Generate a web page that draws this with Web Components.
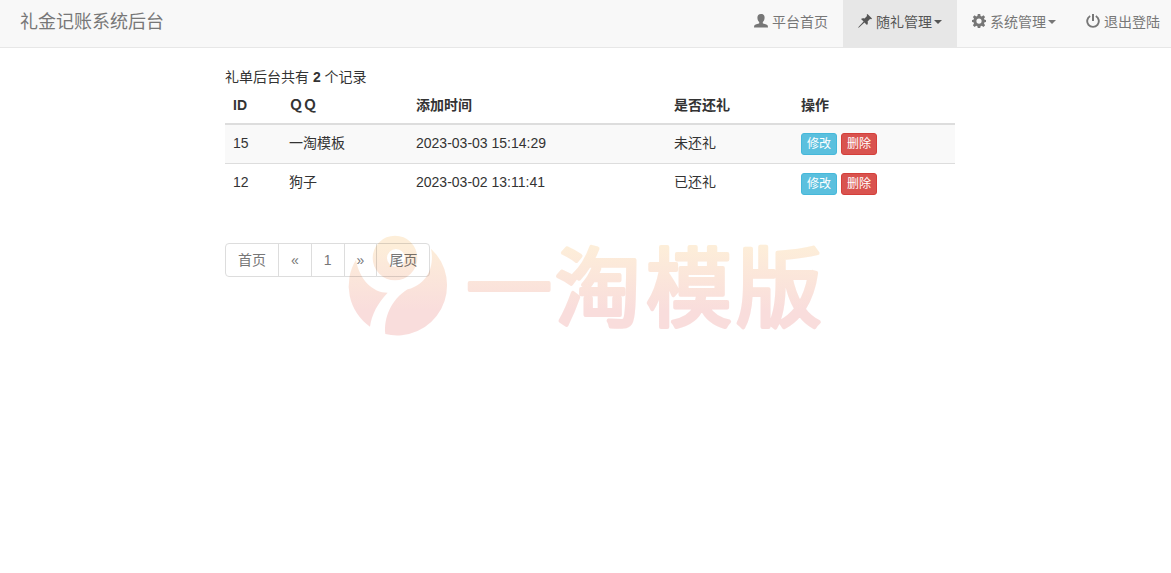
<!DOCTYPE html>
<html lang="zh-CN">
<head>
<meta charset="utf-8">
<title>礼金记账系统后台</title>
<style>
body { margin: 0; background: #fff; color: #333; font: 14px/20px "Liberation Sans", "Noto Sans CJK SC", sans-serif; }
</style>
</head>
<body>
<admin-navbar brand="礼金记账系统后台">
  <nav-item icon="user">平台首页</nav-item>
  <nav-item icon="pin" active menu>随礼管理</nav-item>
  <nav-item icon="cog" menu>系统管理</nav-item>
  <nav-item icon="off">退出登陆</nav-item>
</admin-navbar>
<admin-content>
  <span>礼单后台共有 <b>2</b> 个记录</span>
  <gift-table slot="table"></gift-table>
  <page-links slot="pages"></page-links>
</admin-content>
<brand-watermark></brand-watermark>

<script>
const define = (name, render) => customElements.define(name, class extends HTMLElement {
  connectedCallback() {
    if (!this.shadowRoot) this.attachShadow({ mode: 'open' }).innerHTML = render(this);
  }
});

const icons = {
  user: '<path d="M7 0C4.500 0 3.400 1.500 3.400 3.600c0 1.900.7 3.600 1.800 4.500v1.100C4.400 9.900 1.800 10.200.7 11.100c-.5.500-.7 1.300-.7 2.300h14c0-1-.2-1.800-.7-2.300-1.100-.9-3.700-1.200-4.500-1.900V8.100c1.100-.9 1.800-2.600 1.800-4.500C10.600 1.500 9.500 0 7 0z"/>',
  pin: '<path d="M9.500 0 14 4.500l-.7.8-1.300-.3-2.400 2.500c.5 1.500.3 2.700-.6 3.500L6.400 8.400 1.300 13.300 0 14l.7-1.300 4.900-5.100L3 5c.9-.9 2.100-1.100 3.500-.6L9 2 8.700.8z"/>',
  cog: '<path fill-rule="evenodd" d="M5.800 0h2.400l.4 1.900 1.200.5 1.600-1.100 1.700 1.700L12 4.600l.5 1.200 1.500.3v1.900l-1.500.3-.5 1.300 1.100 1.600-1.700 1.700-1.600-1.100-1.200.5-.4 1.700H5.800l-.4-1.700-1.200-.5-1.600 1.100L.9 11.200 2 9.600l-.5-1.300L0 8V6.100l1.500-.3L2 4.600.9 3l1.700-1.700 1.600 1.100 1.200-.5zM7 4.500a2.600 2.600 0 1 0 0 5.200 2.600 2.600 0 0 0 0-5.200z"/>',
  off: '<path d="M6 0h2v7H6z"/><path fill="none" stroke="currentColor" stroke-width="1.900" d="M4.200 2a5.800 5.800 0 1 0 5.600 0"/>'
};

define('nav-item', el => `
<style>
:host { display: block; }
a { display: flex; align-items: center; padding: 12px 15px 15px; color: #777; text-decoration: none; }
:host([active]) a { background: #e7e7e7; color: #555; }
svg { width: 14px; height: 14px; margin: 0 4px 2px 0; fill: currentColor; }
i { margin-left: 2px; border: 4px solid transparent; border-top-color: currentColor; border-bottom: 0; }
</style>
<a href="#"><svg viewBox="0 0 14 14" aria-hidden="true">${icons[el.getAttribute('icon')]}</svg><slot></slot>${el.hasAttribute('menu') ? '<i></i>' : ''}</a>`);

define('admin-navbar', el => `
<style>
:host { display: block; overflow: hidden; background: #f8f8f8; border-bottom: 1px solid #e7e7e7; }
header { display: flex; justify-content: space-between; padding-left: 20px; margin-right: -4px; }
.brand { padding: 12px 0 15px; font-size: 18px; color: #777; text-decoration: none; }
nav { display: flex; }
</style>
<header><a class="brand" href="#">${el.getAttribute('brand')}</a><nav><slot></slot></nav></header>`);

define('admin-content', () => `
<style>
:host { display: block; padding: 19px 0 0 9px; }
main { max-width: 730px; margin: 0 auto; }
.pages { margin-top: 40px; }
</style>
<main>
  <div><slot></slot></div>
  <slot name="table"></slot>
  <div class="pages"><slot name="pages"></slot></div>
</main>`);

define('action-button', () => `
<style>
:host { display: block; }
button { display: block; padding: 1px 5px; border: 1px solid #46b8da; border-radius: 3px; background: #5bc0de; color: #fff; font: inherit; font-size: 12px; line-height: 18px; }
:host([danger]) button { background: #d9534f; border-color: #d43f3a; }
</style>
<button type="button"><slot></slot></button>`);

const rows = [
  ['15', '一淘模板', '2023-03-03 15:14:29', '未还礼'],
  ['12', '狗子', '2023-03-02 13:11:41', '已还礼']
];

define('gift-table', () => `
<style>
:host { display: block; }
table { width: 100%; table-layout: fixed; border-collapse: separate; border-spacing: 0; }
.id { width: 56px; } .name, .state { width: 127px; } .time { width: 258px; }
th, td { box-sizing: border-box; padding: 8px; text-align: left; vertical-align: top; }
th { border-bottom: 2px solid #ddd; }
tr + tr td { border-top: 1px solid #ddd; }
tr + tr .actions { padding-top: 1px; }
tbody tr:nth-child(odd) { background: #f9f9f9; }
.actions { display: flex; gap: 4px; }
</style>
<table>
  <colgroup><col class="id"><col class="name"><col class="time"><col class="state"><col></colgroup>
  <thead><tr><th>ID</th><th>ＱＱ</th><th>添加时间</th><th>是否还礼</th><th>操作</th></tr></thead>
  <tbody>${rows.map(r => `<tr>${r.map(c => `<td>${c}</td>`).join('')}<td><div class="actions"><action-button>修改</action-button><action-button danger>删除</action-button></div></td></tr>`).join('')}</tbody>
</table>`);

define('page-links', () => `
<style>
:host { display: block; }
nav { display: flex; }
a { padding: 6px 12px; border: 1px solid #ddd; margin-left: -1px; background: #fff; color: #777; text-decoration: none; }
a:first-child { margin-left: 0; border-radius: 4px 0 0 4px; }
a:last-child { border-radius: 0 4px 4px 0; }
</style>
<nav>${['首页', '«', '1', '»', '尾页'].map(t => `<a href="#">${t}</a>`).join('')}</nav>`);

define('brand-watermark', () => `
<style>
:host { position: fixed; inset: 0; display: grid; place-items: center; pointer-events: none; mix-blend-mode: multiply; }
svg { width: 474px; height: 102px; overflow: visible; }
text { font: 400 86px "Noto Sans CJK SC", sans-serif; stroke: url(#tint); stroke-width: 4; stroke-linejoin: round; }
</style>
<svg viewBox="0 0 474 102" fill="url(#tint)">
  <defs>
    <linearGradient id="tint" gradientUnits="userSpaceOnUse" x1="0" y1="0" x2="0" y2="100"><stop offset=".1" stop-color="#fdeed9"/><stop offset=".75" stop-color="#f9dddc"/></linearGradient>
    <linearGradient id="mark" gradientUnits="userSpaceOnUse" x1="0" y1="33" x2="0" y2="333"><stop offset=".1" stop-color="#fdeed9"/><stop offset=".75" stop-color="#f9dddc"/></linearGradient>
  </defs>
  <g transform="scale(.33333) translate(-404 -34)" fill="url(#mark)">
    <path d="M425 105C435 165 475 204 520 204C490 235 472 270 467 306A150 150 0 0 1 425 105Z"/>
    <path d="M650 72A150 150 0 0 1 513 328C508 280 530 225 580 194C635 180 662 130 650 72Z"/>
    <path fill-rule="evenodd" d="M542 33a67 67 0 1 0 0 134a67 67 0 1 0 0-134zM545 73a27 27 0 1 1 0 54a27 27 0 1 1 0-54z"/>
  </g>
  <text y="84"><tspan x="117">一</tspan><tspan x="206">淘</tspan><tspan x="297">模</tspan><tspan x="387">版</tspan></text>
</svg>`);
</script>
</body>
</html>
